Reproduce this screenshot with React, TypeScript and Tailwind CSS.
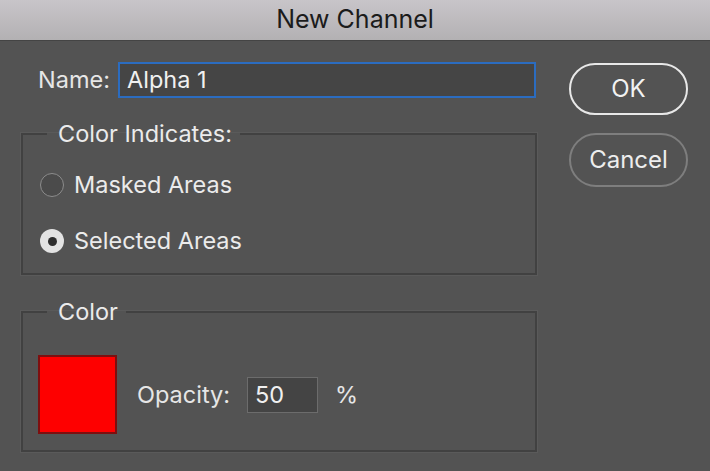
import React from "react";

const FONT = { fontFamily: "Inter, 'Liberation Sans', Arial, sans-serif" };

type RadioProps = { label: string; checked?: boolean };

function Radio({ label, checked }: RadioProps) {
  return (
    <label className="flex h-[32px] items-center gap-[10px]">
      {checked ? (
        <span className="flex h-[24px] w-[24px] items-center justify-center rounded-full bg-[#e3e3e3]">
          <span className="h-[9px] w-[9px] rounded-full bg-[#2e2e2e]" />
        </span>
      ) : (
        <span className="h-[24px] w-[24px] rounded-full border-[1.5px] border-[#8c8c8c] bg-[#4b4b4b]" />
      )}
      <span className="text-[23.5px] text-[#ebebeb]">{label}</span>
    </label>
  );
}

export default function App() {
  return (
    <div className="flex h-[471px] w-[710px] flex-col overflow-hidden bg-[#535353]" style={FONT}>
      <div className="flex h-[41px] shrink-0 items-center justify-center border-b border-[#444] bg-gradient-to-b from-[#c8c5c9] to-[#b3b1b3] text-[25px] text-[#1b1b1b]">
        New Channel
      </div>

      <div className="flex pl-[21px] pt-[21px]">
        <div className="flex w-[516px] flex-col">
          <div className="flex h-[36px] items-center">
            <span className="w-[97px] pl-[17px] text-[23.5px] text-[#e6e6e6]">Name:</span>
            <div className="flex h-[36px] w-[418px] items-center border-2 border-[#2b6cc0] bg-[#454545] px-[7px] text-[23.5px] text-[#f0f0f0]">
              Alpha 1
            </div>
          </div>

          <fieldset className="mt-[24px] border-2 border-[#414141] px-[17px] pb-[16px] shadow-[0_0_0_1px_#5a5a5a]">
            <legend className="ml-[7px] pl-[11px] pr-[8px] text-[23.5px] leading-[24px] text-[#ebebeb]">Color Indicates:</legend>
            <div className="mt-[23px] flex flex-col gap-[24px]">
              <Radio label="Masked Areas" />
              <Radio label="Selected Areas" checked />
            </div>
          </fieldset>

          <fieldset className="mt-[25px] border-2 border-[#414141] px-[15px] pb-[16px] shadow-[0_0_0_1px_#5a5a5a]">
            <legend className="ml-[9px] pl-[11px] pr-[8px] text-[23.5px] leading-[24px] text-[#ebebeb]">Color</legend>
            <div className="mt-[31px] flex items-center">
              <div className="h-[79px] w-[79px] border-2 border-[#7d0f0f] bg-[#fe0000]" />
              <span className="ml-[20px] text-[23.5px] text-[#e6e6e6]">Opacity:</span>
              <div className="ml-[17px] flex h-[36px] w-[71px] items-center border border-[#6c6c6c] bg-[#444] px-[7px] text-[23.5px] text-[#f0f0f0]">
                50
              </div>
              <span className="ml-[17px] text-[23.5px] text-[#e6e6e6]">%</span>
            </div>
          </fieldset>
        </div>

        <div className="ml-[32px] flex flex-col gap-[18px] pt-[1px]">
          <button className="h-[52px] w-[119px] rounded-full border-2 border-[#e8e8e8] text-[24px] text-[#f2f2f2]">
            OK
          </button>
          <button className="h-[54px] w-[119px] rounded-full border-2 border-[#7e7e7e] text-[24px] text-[#ededed]">
            Cancel
          </button>
        </div>
      </div>
    </div>
  );
}
